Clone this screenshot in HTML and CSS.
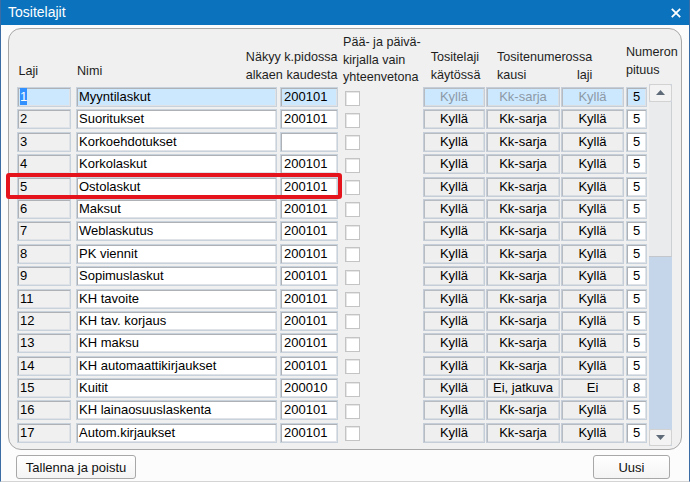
FILE: index.html
```html
<!DOCTYPE html>
<html lang="fi">
<head>
    <meta charset="UTF-8">
    <title>Tositelajit</title>
    <link rel="stylesheet" href="styles.css">
</head>
<body>

<div class="window">
    <div class="titlebar">
        <span>Tositelajit</span>
        <svg class="close" width="10" height="10" viewBox="0 0 10 10">
            <path d="M0.8 0.8 L9.2 9.2 M9.2 0.8 L0.8 9.2" stroke="#fff" stroke-width="1.8"/>
        </svg>
    </div>

    <div class="content">
        <div class="panel">
            <div class="head">
                <div class="h-laji">Laji</div>
                <div class="h-nimi">
                    <span>Nimi</span>
                    <span class="h-kausi">Näkyy k.pidossa<br>alkaen kaudesta</span>
                </div>
                <div class="h-paa">Pää- ja päivä-<br>kirjalla vain<br>yhteenvetona</div>
                <div class="h-kaytossa">Tositelaji<br>käytössä</div>
                <div class="h-numero">
                    Tositenumerossa
                    <div class="h-sub"><span>kausi</span><span>laji</span></div>
                </div>
                <div class="h-pituus">Numeron<br>pituus</div>
            </div>

            <div class="table">
                <div class="rows">
                    <div class="row selected">
                        <div class="field f-laji ro"><span class="sel">1</span></div>
                        <div class="field f-nimi">Myyntilaskut</div>
                        <div class="field f-kausi">200101</div>
                        <div class="chk"></div>
                        <div class="cell c-kaytossa">Kyllä</div>
                        <div class="cell c-kausi">Kk-sarja</div>
                        <div class="cell c-laji">Kyllä</div>
                        <div class="field f-pituus">5</div>
                    </div>
                    <div class="row">
                        <div class="field f-laji ro">2</div>
                        <div class="field f-nimi">Suoritukset</div>
                        <div class="field f-kausi">200101</div>
                        <div class="chk"></div>
                        <div class="cell c-kaytossa">Kyllä</div>
                        <div class="cell c-kausi">Kk-sarja</div>
                        <div class="cell c-laji">Kyllä</div>
                        <div class="field f-pituus">5</div>
                    </div>
                    <div class="row">
                        <div class="field f-laji ro">3</div>
                        <div class="field f-nimi">Korkoehdotukset</div>
                        <div class="field f-kausi"></div>
                        <div class="chk"></div>
                        <div class="cell c-kaytossa">Kyllä</div>
                        <div class="cell c-kausi">Kk-sarja</div>
                        <div class="cell c-laji">Kyllä</div>
                        <div class="field f-pituus">5</div>
                    </div>
                    <div class="row">
                        <div class="field f-laji ro">4</div>
                        <div class="field f-nimi">Korkolaskut</div>
                        <div class="field f-kausi">200101</div>
                        <div class="chk"></div>
                        <div class="cell c-kaytossa">Kyllä</div>
                        <div class="cell c-kausi">Kk-sarja</div>
                        <div class="cell c-laji">Kyllä</div>
                        <div class="field f-pituus">5</div>
                    </div>
                    <div class="row">
                        <div class="field f-laji ro">5</div>
                        <div class="field f-nimi">Ostolaskut</div>
                        <div class="field f-kausi">200101</div>
                        <div class="chk"></div>
                        <div class="cell c-kaytossa">Kyllä</div>
                        <div class="cell c-kausi">Kk-sarja</div>
                        <div class="cell c-laji">Kyllä</div>
                        <div class="field f-pituus">5</div>
                    </div>
                    <div class="row">
                        <div class="field f-laji ro">6</div>
                        <div class="field f-nimi">Maksut</div>
                        <div class="field f-kausi">200101</div>
                        <div class="chk"></div>
                        <div class="cell c-kaytossa">Kyllä</div>
                        <div class="cell c-kausi">Kk-sarja</div>
                        <div class="cell c-laji">Kyllä</div>
                        <div class="field f-pituus">5</div>
                    </div>
                    <div class="row">
                        <div class="field f-laji ro">7</div>
                        <div class="field f-nimi">Weblaskutus</div>
                        <div class="field f-kausi">200101</div>
                        <div class="chk"></div>
                        <div class="cell c-kaytossa">Kyllä</div>
                        <div class="cell c-kausi">Kk-sarja</div>
                        <div class="cell c-laji">Kyllä</div>
                        <div class="field f-pituus">5</div>
                    </div>
                    <div class="row">
                        <div class="field f-laji ro">8</div>
                        <div class="field f-nimi">PK viennit</div>
                        <div class="field f-kausi">200101</div>
                        <div class="chk"></div>
                        <div class="cell c-kaytossa">Kyllä</div>
                        <div class="cell c-kausi">Kk-sarja</div>
                        <div class="cell c-laji">Kyllä</div>
                        <div class="field f-pituus">5</div>
                    </div>
                    <div class="row">
                        <div class="field f-laji ro">9</div>
                        <div class="field f-nimi">Sopimuslaskut</div>
                        <div class="field f-kausi">200101</div>
                        <div class="chk"></div>
                        <div class="cell c-kaytossa">Kyllä</div>
                        <div class="cell c-kausi">Kk-sarja</div>
                        <div class="cell c-laji">Kyllä</div>
                        <div class="field f-pituus">5</div>
                    </div>
                    <div class="row">
                        <div class="field f-laji ro">11</div>
                        <div class="field f-nimi">KH tavoite</div>
                        <div class="field f-kausi">200101</div>
                        <div class="chk"></div>
                        <div class="cell c-kaytossa">Kyllä</div>
                        <div class="cell c-kausi">Kk-sarja</div>
                        <div class="cell c-laji">Kyllä</div>
                        <div class="field f-pituus">5</div>
                    </div>
                    <div class="row">
                        <div class="field f-laji ro">12</div>
                        <div class="field f-nimi">KH tav. korjaus</div>
                        <div class="field f-kausi">200101</div>
                        <div class="chk"></div>
                        <div class="cell c-kaytossa">Kyllä</div>
                        <div class="cell c-kausi">Kk-sarja</div>
                        <div class="cell c-laji">Kyllä</div>
                        <div class="field f-pituus">5</div>
                    </div>
                    <div class="row">
                        <div class="field f-laji ro">13</div>
                        <div class="field f-nimi">KH maksu</div>
                        <div class="field f-kausi">200101</div>
                        <div class="chk"></div>
                        <div class="cell c-kaytossa">Kyllä</div>
                        <div class="cell c-kausi">Kk-sarja</div>
                        <div class="cell c-laji">Kyllä</div>
                        <div class="field f-pituus">5</div>
                    </div>
                    <div class="row">
                        <div class="field f-laji ro">14</div>
                        <div class="field f-nimi">KH automaattikirjaukset</div>
                        <div class="field f-kausi">200101</div>
                        <div class="chk"></div>
                        <div class="cell c-kaytossa">Kyllä</div>
                        <div class="cell c-kausi">Kk-sarja</div>
                        <div class="cell c-laji">Kyllä</div>
                        <div class="field f-pituus">5</div>
                    </div>
                    <div class="row">
                        <div class="field f-laji ro">15</div>
                        <div class="field f-nimi">Kuitit</div>
                        <div class="field f-kausi">200010</div>
                        <div class="chk"></div>
                        <div class="cell c-kaytossa">Kyllä</div>
                        <div class="cell c-kausi">Ei, jatkuva</div>
                        <div class="cell c-laji">Ei</div>
                        <div class="field f-pituus">8</div>
                    </div>
                    <div class="row">
                        <div class="field f-laji ro">16</div>
                        <div class="field f-nimi">KH lainaosuuslaskenta</div>
                        <div class="field f-kausi">200101</div>
                        <div class="chk"></div>
                        <div class="cell c-kaytossa">Kyllä</div>
                        <div class="cell c-kausi">Kk-sarja</div>
                        <div class="cell c-laji">Kyllä</div>
                        <div class="field f-pituus">5</div>
                    </div>
                    <div class="row">
                        <div class="field f-laji ro">17</div>
                        <div class="field f-nimi">Autom.kirjaukset</div>
                        <div class="field f-kausi">200101</div>
                        <div class="chk"></div>
                        <div class="cell c-kaytossa">Kyllä</div>
                        <div class="cell c-kausi">Kk-sarja</div>
                        <div class="cell c-laji">Kyllä</div>
                        <div class="field f-pituus">5</div>
                    </div>
                </div>

                <div class="scrollbar">
                    <div class="sb-btn">
                        <svg width="9" height="5" viewBox="0 0 9 5"><path d="M0 5 L4.5 0 L9 5 Z" fill="#5f6b78"/></svg>
                    </div>
                    <div class="sb-thumb"></div>
                    <div class="sb-track"></div>
                    <div class="sb-btn">
                        <svg width="9" height="5" viewBox="0 0 9 5"><path d="M0 0 L4.5 5 L9 0 Z" fill="#5f6b78"/></svg>
                    </div>
                </div>
            </div>
        </div>

        <div class="footer">
            <button class="btn btn-save">Tallenna ja poistu</button>
            <button class="btn btn-new">Uusi</button>
        </div>
    </div>

    <div class="mark"></div>
</div>

</body>
</html>
```

FILE: styles.css
```css
body {
    margin: 0;
    font-family: "Liberation Sans", Arial, sans-serif;
    font-size: 13px;
    color: #000;
    background: #fff;
}

.window {
    position: relative;
    width: 690px;
    height: 482px;
    box-sizing: border-box;
    border-left: 1px solid #3b6da4;
    border-right: 1px solid #3b6da4;
    border-bottom: 1px solid #d4d4d4;
    background: #fcfcfc;
    display: flex;
    flex-direction: column;
}

.titlebar {
    height: 25px;
    flex: none;
    background: #0b73bd;
    color: #fff;
    font-size: 14px;
    line-height: 25px;
    display: flex;
    align-items: center;
    justify-content: space-between;
    padding: 0 8px 0 7px;
}

.content {
    flex: 1;
    padding: 3px 7px 0 7px;
}

.panel {
    border: 1px solid #a7a7a7;
    border-radius: 13px;
    background: #f0f0f0;
    padding: 0 8px 3px 7.5px;
    overflow: hidden;
}

/* column headers */
.head {
    height: 55px;
    display: flex;
    align-items: flex-end;
    font-size: 12.6px;
    line-height: 17.5px;
    color: #1e1e1e;
    white-space: nowrap;
}

.head > div {
    flex: none;
}

.h-laji {
    width: 56.5px;
    padding-left: 2px;
    margin-bottom: 3.6px;
}

.h-nimi {
    width: 260.5px;
    padding-left: 2px;
    display: flex;
    justify-content: space-between;
    align-items: flex-end;
}

.h-nimi > span:first-child {
    margin-bottom: 3.6px;
}

.h-kausi {
    text-align: right;
}

.h-paa {
    width: 87.7px;
    margin-left: 5.5px;
    margin-bottom: -2.6px;
}

.h-kaytossa {
    width: 66.3px;
}

.h-numero {
    width: 129px;
}

.h-sub {
    display: flex;
}

.h-sub span:first-child {
    width: 80px;
}

.h-pituus {
    margin-bottom: 4.6px;
}

/* rows */
.table {
    display: flex;
    height: 362px;
}

.rows {
    padding-top: 3px;
}

.row {
    display: flex;
    align-items: center;
    height: 20px;
    margin-bottom: 2.4px;
}

.row > div {
    flex: none;
}

.field {
    box-sizing: border-box;
    height: 20px;
    border: 1px solid #c8d2dc;
    box-shadow: inset 1px 1px 0 #aeb2b6, inset -1px -1px 0 #dfe3e7;
    background: #fff;
    padding-left: 2.5px;
    line-height: 18px;
    white-space: nowrap;
    overflow: hidden;
}

.field.ro { background: #f0f0f0; }

.f-laji { width: 54px; }
.f-nimi { width: 201.5px; margin-left: 5px; }
.f-kausi { width: 57.5px; margin-left: 3px; padding-left: 3px; }
.f-pituus { width: 21px; margin-left: 2px; padding-left: 0; text-align: center; }

.chk {
    box-sizing: border-box;
    width: 15px;
    height: 15px;
    margin-left: 7px;
    margin-top: 2px;
    background: #fff;
    border: 1px solid #c4c4c4;
    box-shadow: inset 1px 1px 0 #e6e6e6;
}

.cell {
    box-sizing: border-box;
    height: 20px;
    border: 1px solid #c5ced8;
    box-shadow: inset 1px 1px 0 #b7bcc2, inset -1px -1px 0 #d9dee3;
    background: #efefef;
    text-align: center;
    line-height: 18px;
    white-space: nowrap;
}

.c-kaytossa { width: 62px; margin-left: 63.5px; }
.c-kausi { width: 74px; margin-left: 1px; }
.c-laji { width: 63px; margin-left: 1px; }

.row.selected .field,
.row.selected .cell {
    background: #cce8ff;
}

.row.selected .cell {
    color: #8c9aa6;
}

.sel {
    background: #3390ff;
    color: #fff;
    padding: 1px 0;
}

/* scrollbar */
.scrollbar {
    flex: none;
    width: 22.5px;
    margin-left: 2px;
    display: flex;
    flex-direction: column;
    background: #c6d6ea;
}

.sb-btn {
    box-sizing: border-box;
    height: 17.5px;
    background: #f3f3f3;
    border: 1px solid #d2d2d2;
    border-radius: 2px;
    display: flex;
    align-items: center;
    justify-content: center;
}

.sb-thumb {
    height: 155px;
    box-sizing: border-box;
    background: #eaebec;
    border-right: 1px solid #cdd0d3;
    border-bottom: 1px solid #c3c6ca;
}

.sb-track {
    flex: 1;
}

/* buttons */
.footer {
    display: flex;
    justify-content: space-between;
    padding: 5px 12px 0 8px;
}

.btn {
    height: 24px;
    font-family: "Liberation Sans", Arial, sans-serif;
    font-size: 13px;
    color: #111;
    background: linear-gradient(#ffffff, #f4f4f4);
    border: 1px solid #a8a8a8;
    border-radius: 3px;
    padding: 0;
}

.btn-save { width: 120px; }
.btn-new { width: 77px; }

/* red annotation frame over row 5 */
.mark {
    position: absolute;
    left: 5px;
    top: 173px;
    width: 336px;
    height: 26px;
    box-sizing: border-box;
    border: 4px solid #e5141c;
    border-radius: 3px;
}
```
